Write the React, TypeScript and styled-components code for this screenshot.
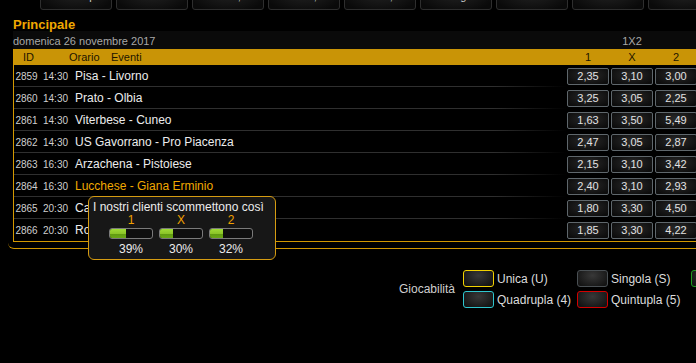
import React from 'react';
import styled, { createGlobalStyle } from 'styled-components';

const GlobalStyle = createGlobalStyle`
  html, body {
    margin: 0;
    background: #000;
    overflow: hidden;
  }
  body {
    font-family: "Liberation Sans", Arial, sans-serif;
  }
`;

const Page = styled.div`
  width: 700px;
`;

const TopBar = styled.div`
  display: flex;
  gap: 4px;
  padding-left: 40px;
  margin-top: -16px;
`;

const TabButton = styled.div`
  flex: 0 0 72px;
  height: 26px;
  box-sizing: border-box;
  border: 1px solid #2e2e2e;
  border-radius: 3px;
  background: radial-gradient(ellipse at 50% 20%, #262626 0%, #0a0a0a 85%);
  color: #cfcfcf;
  font-size: 11px;
  line-height: 22px;
  text-align: center;
  white-space: nowrap;
  overflow: hidden;
`;

const Section = styled.section`
  position: relative;
  margin-left: 8px;
  padding: 0 0 6px 5px;
  border-bottom: 1px solid #d39800;
  border-bottom-left-radius: 6px;
`;

const Heading = styled.h2`
  margin: 0;
  padding-top: 8px;
  font-size: 13px;
  line-height: 13px;
  font-weight: bold;
  color: #f0a800;
`;

const DateRow = styled.div`
  display: flex;
  justify-content: space-between;
  height: 16px;
  padding-top: 2px;
  background: #0a0a0a;
  color: #a8a8a8;
  font-size: 11px;
  line-height: 16px;
`;

const MarketLabel = styled.div`
  width: 130px;
  padding-right: 3px;
  text-align: center;
`;

const Table = styled.div`
  border-left: 1px solid #d39800;
  border-bottom: 1px solid #d39800;
`;

const HeaderRow = styled.div`
  display: flex;
  height: 16px;
  background: #c99406;
  color: #1c1400;
  font-size: 11px;
  line-height: 16px;
`;

const HeadCell = styled.div<{ $w: number; $pad?: number }>`
  flex: 0 0 ${(p) => p.$w}px;
  padding-left: ${(p) => p.$pad ?? 0}px;
`;

const HeadOdds = styled.div`
  display: flex;
  gap: 2px;
  margin-left: auto;
  padding-right: 3px;
`;

const HeadOdd = styled.div`
  width: 42px;
  text-align: center;
`;

const Row = styled.div<{ $last?: boolean }>`
  display: flex;
  align-items: center;
  height: 22px;
  background: ${(p) =>
    p.$last
      ? 'none'
      : 'linear-gradient(to right, #2f2f2f 0, #2f2f2f 480px, transparent 552px) left bottom / 100% 1px no-repeat'};
`;

const IdCell = styled.div`
  flex: 0 0 25px;
  text-align: center;
  font-size: 10px;
  color: #cfcfcf;
`;

const TimeCell = styled.div`
  flex: 0 0 32px;
  padding-left: 4px;
  font-size: 10px;
  color: #cfcfcf;
`;

const EventCell = styled.div<{ $hot?: boolean }>`
  flex: 1;
  font-size: 12px;
  color: ${(p) => (p.$hot ? '#f0a800' : '#ececec')};
  white-space: nowrap;
`;

const OddsGroup = styled.div`
  display: flex;
  gap: 2px;
  padding-right: 3px;
`;

const OddBox = styled.div`
  width: 42px;
  height: 17px;
  box-sizing: border-box;
  border: 1px solid #5f676c;
  border-radius: 2px;
  background: radial-gradient(ellipse at 50% 40%, #2a2a2a 0%, #0d0d0d 85%);
  color: #e2e2e2;
  font-size: 11px;
  line-height: 15px;
  text-align: center;
`;

const Tooltip = styled.div`
  position: absolute;
  left: 80px;
  top: 186px;
  width: 188px;
  height: 64px;
  box-sizing: border-box;
  padding-top: 3px;
  background: #171717;
  border: 1px solid #d69c12;
  border-radius: 6px;
  color: #ececec;
  font-size: 12px;
`;

const TipTitle = styled.div`
  padding-left: 4px;
  line-height: 14px;
  white-space: nowrap;
`;

const TipGrid = styled.div`
  display: grid;
  grid-template-columns: repeat(3, 44px);
  column-gap: 6px;
  padding-left: 20px;
`;

const TipCol = styled.div`
  display: flex;
  flex-direction: column;
  align-items: center;
`;

const TipSign = styled.div`
  color: #f0a000;
  line-height: 13px;
`;

const Bar = styled.div`
  width: 44px;
  height: 11px;
  margin-top: 1px;
  box-sizing: border-box;
  border: 1px solid #7a7a7a;
  border-radius: 3px;
  background: #0e0e0e;
  overflow: hidden;
`;

const BarFill = styled.div`
  height: 100%;
  background: linear-gradient(#9fdc36 0%, #8cc628 50%, #5f9a10 51%, #6aa816 100%);
`;

const TipPct = styled.div`
  margin-top: 3px;
  line-height: 14px;
`;

const Legend = styled.div`
  display: flex;
  align-items: center;
  margin-top: 21px;
  padding-left: 399px;
`;

const LegendTitle = styled.div`
  margin-right: 8px;
  color: #cfcfcf;
  font-size: 12px;
`;

const LegendGrid = styled.div`
  display: grid;
  grid-template-columns: repeat(4, 114px);
  row-gap: 4px;
`;

const LegendItem = styled.div`
  display: flex;
  align-items: center;
  gap: 3px;
  color: #dcdcdc;
  font-size: 12px;
  white-space: nowrap;
`;

const LegendSwatch = styled.div<{ $c: string }>`
  flex: 0 0 31px;
  height: 17px;
  box-sizing: border-box;
  border: 1px solid ${(p) => p.$c};
  border-radius: 3px;
  background: radial-gradient(ellipse at 50% 30%, #383838 0%, #141414 85%);
`;

const tabs = ['1/2 Tempo', 'Gol/No', 'U/O 1,5', 'U/O 2,5', 'U/O 3,5', 'Multigol', 'Combo 1X2', 'Combo U/O', 'Combo Gol'];

const events = [
  { id: '2859', time: '14:30', name: 'Pisa - Livorno', odds: ['2,35', '3,10', '3,00'] },
  { id: '2860', time: '14:30', name: 'Prato - Olbia', odds: ['3,25', '3,05', '2,25'] },
  { id: '2861', time: '14:30', name: 'Viterbese - Cuneo', odds: ['1,63', '3,50', '5,49'] },
  { id: '2862', time: '14:30', name: 'US Gavorrano - Pro Piacenza', odds: ['2,47', '3,05', '2,87'] },
  { id: '2863', time: '16:30', name: 'Arzachena - Pistoiese', odds: ['2,15', '3,10', '3,42'] },
  { id: '2864', time: '16:30', name: 'Lucchese - Giana Erminio', odds: ['2,40', '3,10', '2,93'], hot: true },
  { id: '2865', time: '20:30', name: 'Carrarese - Alessandria', odds: ['1,80', '3,30', '4,50'] },
  { id: '2866', time: '20:30', name: 'Robur Siena - Pontedera', odds: ['1,85', '3,30', '4,22'] },
];

const split = [
  { sign: '1', pct: 39 },
  { sign: 'X', pct: 30 },
  { sign: '2', pct: 32 },
];

const legend = [
  { label: 'Unica (U)', color: '#f2d200' },
  { label: 'Singola (S)', color: '#4a5054' },
  { label: 'Doppia (D)', color: '#1f9a1f' },
  { label: 'Tripla (3)', color: '#3060d0' },
  { label: 'Quadrupla (4)', color: '#2fc6cf' },
  { label: 'Quintupla (5)', color: '#d40000' },
];

export default function App(): React.JSX.Element {
  return (
    <Page>
      <GlobalStyle />
      <TopBar>
        {tabs.map((t) => (
          <TabButton key={t}>{t}</TabButton>
        ))}
      </TopBar>

      <Section>
        <Heading>Principale</Heading>
        <DateRow>
          <span>domenica 26 novembre 2017</span>
          <MarketLabel>1X2</MarketLabel>
        </DateRow>

        <Table>
          <HeaderRow>
            <HeadCell $w={46} $pad={9}>ID</HeadCell>
            <HeadCell $w={42}>Orario</HeadCell>
            <HeadCell $w={60}>Eventi</HeadCell>
            <HeadOdds>
              <HeadOdd>1</HeadOdd>
              <HeadOdd>X</HeadOdd>
              <HeadOdd>2</HeadOdd>
            </HeadOdds>
          </HeaderRow>
          {events.map((e, i) => (
            <Row key={e.id} $last={i === events.length - 1}>
              <IdCell>{e.id}</IdCell>
              <TimeCell>{e.time}</TimeCell>
              <EventCell $hot={e.hot}>{e.name}</EventCell>
              <OddsGroup>
                {e.odds.map((o, j) => (
                  <OddBox key={j}>{o}</OddBox>
                ))}
              </OddsGroup>
            </Row>
          ))}
        </Table>

        <Tooltip>
          <TipTitle>I nostri clienti scommettono così</TipTitle>
          <TipGrid>
            {split.map((s) => (
              <TipCol key={s.sign}>
                <TipSign>{s.sign}</TipSign>
                <Bar>
                  <BarFill style={{ width: `${s.pct}%` }} />
                </Bar>
                <TipPct>{s.pct}%</TipPct>
              </TipCol>
            ))}
          </TipGrid>
        </Tooltip>
      </Section>

      <Legend>
        <LegendTitle>Giocabilità</LegendTitle>
        <LegendGrid>
          {legend.map((l) => (
            <LegendItem key={l.label}>
              <LegendSwatch $c={l.color} />
              {l.label}
            </LegendItem>
          ))}
        </LegendGrid>
      </Legend>
    </Page>
  );
}
